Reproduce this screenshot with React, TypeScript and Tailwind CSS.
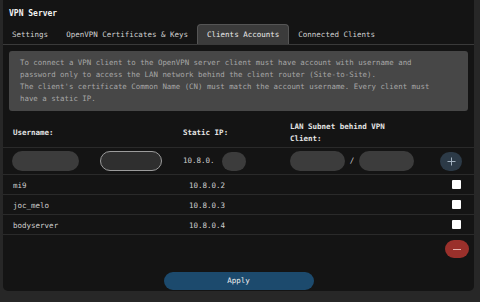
const mono = { fontFamily: '"DejaVu Sans Mono", "Liberation Mono", monospace' };

const tabs = ["Settings", "OpenVPN Certificates & Keys", "Clients Accounts", "Connected Clients"];

const clients = [
  { name: "mi9", ip: "10.8.0.2" },
  { name: "joc_melo", ip: "10.8.0.3" },
  { name: "bodyserver", ip: "10.8.0.4" },
];

const cols = "grid grid-cols-[177px_107px_148px_1fr]";

export default function App() {
  return (
    <div className="w-[480px] h-[302px] bg-[#272727] overflow-hidden" style={mono}>
      <div className="ml-[3px] w-[471px] h-[291px] bg-[#141414] rounded-b-[5px] flex flex-col">
        <div className="h-[24px] pl-[6px] pt-[3px] flex items-center text-[8px] font-bold text-[#f2f2f2]">VPN Server</div>

        {/* tabs */}
        <div className="h-[21px] flex items-end border-b border-[#3a3a3a] text-[7.5px] text-[#d2d2d2]">
          {tabs.map((t) => (
            <div
              key={t}
              className={
                t === "Clients Accounts"
                  ? "h-[20px] px-[9px] pt-[1px] flex items-center bg-[#3b3b3b] border border-b-0 border-[#555] rounded-t-[4px] text-[#ececec]"
                  : "h-[20px] px-[9px] pt-[1px] flex items-center"
              }
            >
              {t}
            </div>
          ))}
        </div>

        {/* info */}
        <div className="mx-[6px] mt-[6px] h-[60px] bg-[#474747] rounded-[3px] px-[11px] pt-[6px] text-[7.4px] leading-[12px] text-[#a6a6a6]">
          <p>To connect a VPN client to the OpenVPN server client must have account with username and</p>
          <p>password only to access the LAN network behind the client router (Site-to-Site).</p>
          <p>The client's certificate Common Name (CN) must match the account username. Every client must</p>
          <p>have a static IP.</p>
        </div>

        {/* header */}
        <div className={`${cols} mt-[7px] h-[30px] items-center border-b border-[#2a2a2a] text-[7.5px] font-bold text-[#e4e4e4] leading-[12px]`}>
          <div className="pl-[10px]">Username:</div>
          <div className="pl-[3px]">Static IP:</div>
          <div className="pl-[3px]">
            LAN Subnet behind VPN
            <br />
            Client:
          </div>
          <div />
        </div>

        {/* input row */}
        <div className={`${cols} h-[27px] items-center border-b border-[#2a2a2a] text-[7.5px] text-[#cfcfcf]`}>
          <div className="pl-[9px] flex items-center gap-[21px]">
            <div className="w-[67px] h-[20px] rounded-full bg-[#3c3c3c]" />
            <div className="w-[62px] h-[20px] rounded-full bg-[#2f2f2f] border-[1.5px] border-[#9c9c9c]" />
          </div>
          <div className="pl-[3px] flex items-center gap-[7px]">
            <span>10.8.0.</span>
            <div className="w-[24px] h-[19px] rounded-full bg-[#3c3c3c]" />
          </div>
          <div className="pl-[3px] flex items-center">
            <div className="w-[55px] h-[20px] rounded-full bg-[#3c3c3c]" />
            <span className="w-[14px] text-center">/</span>
            <div className="w-[55px] h-[20px] rounded-full bg-[#3c3c3c]" />
          </div>
          <div className="pl-[5px]">
            <div className="w-[22px] h-[19px] rounded-full bg-[#2c3a47] flex items-center justify-center">
              <svg width="9" height="9" viewBox="0 0 9 9">
                <path d="M4.5 0.5v8M0.5 4.5h8" stroke="#a3b2c0" strokeWidth="1" />
              </svg>
            </div>
          </div>
        </div>

        {/* clients */}
        {clients.map((c) => (
          <div key={c.name} className={`${cols} h-[20px] items-center border-b border-[#2a2a2a] text-[7.5px] text-[#cfcfcf]`}>
            <div className="pl-[10px] pt-[2px]">{c.name}</div>
            <div className="pl-[9px] pt-[2px]">{c.ip}</div>
            <div />
            <div className="pl-[17px]">
              <div className="w-[9px] h-[9px] bg-white rounded-[1px]" />
            </div>
          </div>
        ))}

        <div className="flex justify-end pr-[5px] mt-[5px]">
          <div className="w-[24px] h-[18px] rounded-full bg-[#9a302b] flex items-center justify-center">
            <div className="w-[8px] h-[1px] bg-[#e7b1ad]" />
          </div>
        </div>

        <div className="flex justify-center mt-[14px]">
          <button className="w-[150px] h-[18px] rounded-full bg-[#1c4a6d] text-[7.5px] text-[#f0f0f0]" style={mono}>
            Apply
          </button>
        </div>
      </div>
    </div>
  );
}
